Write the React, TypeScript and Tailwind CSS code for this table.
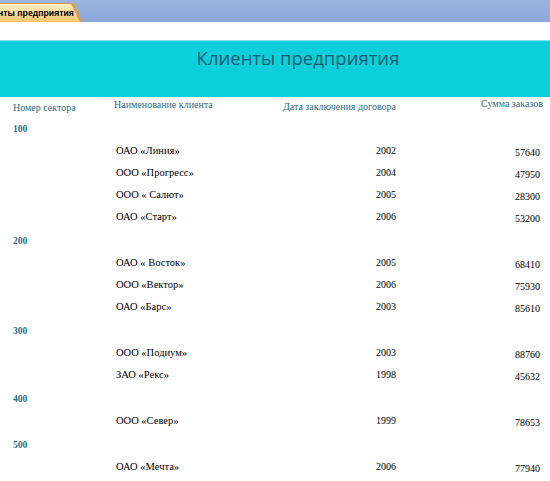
const groups = [
  {
    sector: "100",
    rows: [
      { name: "ОАО «Линия»", year: "2002", sum: "57640" },
      { name: "ООО «Прогресс»", year: "2004", sum: "47950" },
      { name: "ООО « Салют»", year: "2005", sum: "28300" },
      { name: "ОАО «Старт»", year: "2006", sum: "53200" },
    ],
  },
  {
    sector: "200",
    rows: [
      { name: "ОАО « Восток»", year: "2005", sum: "68410" },
      { name: "ООО «Вектор»", year: "2006", sum: "75930" },
      { name: "ОАО «Барс»", year: "2003", sum: "85610" },
    ],
  },
  {
    sector: "300",
    rows: [
      { name: "ООО «Подиум»", year: "2003", sum: "88760" },
      { name: "ЗАО «Рекс»", year: "1998", sum: "45632" },
    ],
  },
  {
    sector: "400",
    rows: [{ name: "ООО «Север»", year: "1999", sum: "78653" }],
  },
  {
    sector: "500",
    rows: [
      { name: "ОАО «Мечта»", year: "2006", sum: "77940" },
      { name: "ЗАО «Юпитер»", year: "2004", sum: "51230" },
    ],
  },
];

const cols = "grid grid-cols-[114px_150px_132px_147px]";

export default function App() {
  return (
    <div className="h-[481px] w-[550px] overflow-hidden bg-white font-['Liberation_Serif',serif]">
      {/* Tab bar */}
      <div className="flex h-[22px] items-end bg-[#8eaadb] bg-gradient-to-b from-[#9cb5e0] to-[#8aa6d8]">
        <div className="h-[19px] w-[82px] bg-[#d8a24a] [clip-path:polygon(0_0,90%_0,100%_100%,0_100%)]">
          <div className="ml-[-1px] mt-px flex h-[18px] w-[81px] items-center bg-gradient-to-b from-[#fff0c4] to-[#f8c46c] [clip-path:polygon(0_0,89%_0,100%_100%,0_100%)]">
            <span className="ml-[-1px] whitespace-nowrap font-['Liberation_Sans',sans-serif] text-[8.7px] font-bold leading-none text-black">
              нты предприятия
            </span>
          </div>
        </div>
      </div>

      {/* Report header */}
      <div className="mt-[18px] h-[57px] border-t border-[#7fe6ee] bg-[#0ccfdc] pl-[46px] pt-[5px]">
        <div className="text-center font-['Open_Sans',sans-serif] text-[18.5px] leading-[24px] text-[#1d5d72]">
          Клиенты предприятия
        </div>
      </div>

      {/* Column headers */}
      <div className={`${cols} h-[22px] text-[10px] leading-none text-[#2d6b85]`}>
        <div className="pl-[13px] pt-[6px]">Номер сектора</div>
        <div className="pt-[3px]">Наименование клиента</div>
        <div className="pt-[5px] text-right">Дата заключения договора</div>
        <div className="pt-[2px] text-right">Сумма заказов</div>
      </div>

      {/* Groups */}
      {groups.map((g) => (
        <div key={g.sector} className="pb-[3px]">
          <div className="flex h-[21px] items-center pl-[13px] text-[9.5px] font-bold leading-none text-[#2b6e89]">
            {g.sector}
          </div>
          {g.rows.map((r) => (
            <div
              key={r.name}
              className={`${cols} h-[22px] items-center leading-none text-black`}
            >
              <div />
              <div className="pl-[2px] text-[10.5px]">{r.name}</div>
              <div className="text-right text-[10px] oldstyle-nums">{r.year}</div>
              <div className="pr-[3px] pt-[3px] text-right text-[10px] oldstyle-nums">
                {r.sum}
              </div>
            </div>
          ))}
        </div>
      ))}
    </div>
  );
}
